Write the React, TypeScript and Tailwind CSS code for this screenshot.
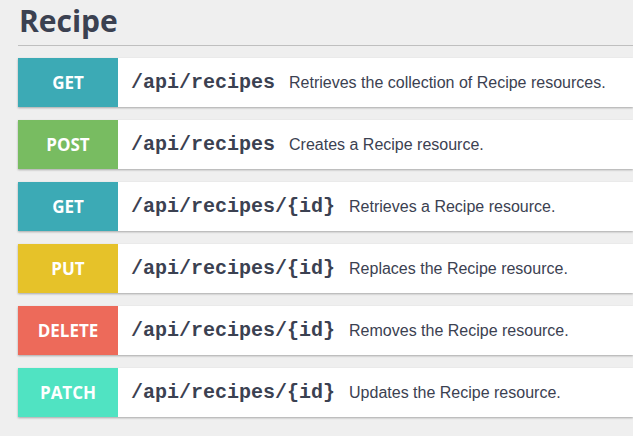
import React from "react";

const ops = [
  { method: "GET", color: "bg-[#3caab5]", path: "/api/recipes", desc: "Retrieves the collection of Recipe resources." },
  { method: "POST", color: "bg-[#78bc61]", path: "/api/recipes", desc: "Creates a Recipe resource." },
  { method: "GET", color: "bg-[#3caab5]", path: "/api/recipes/{id}", desc: "Retrieves a Recipe resource." },
  { method: "PUT", color: "bg-[#e6c229]", path: "/api/recipes/{id}", desc: "Replaces the Recipe resource." },
  { method: "DELETE", color: "bg-[#ed6a5a]", path: "/api/recipes/{id}", desc: "Removes the Recipe resource." },
  { method: "PATCH", color: "bg-[#50e3c2]", path: "/api/recipes/{id}", desc: "Updates the Recipe resource." },
];

export default function App() {
  return (
    <div className="min-h-screen bg-[#efefef] pl-[18px] pt-[1px] overflow-hidden">
      <h2 className="font-['Open_Sans',sans-serif] font-bold text-[30px] leading-[40px] text-[#3b4151] pl-[1px] pb-[4px] border-b border-[#bfbfbf]">
        Recipe
      </h2>
      <div className="flex flex-col gap-[13px] mt-[12px]">
        {ops.map((op, i) => (
          <div key={i} className="flex items-center h-[49px] bg-white shadow-[0_1px_2px_rgba(0,0,0,0.3)]">
            <div className={`${op.color} w-[100px] h-full flex items-center justify-center text-white font-['Open_Sans',sans-serif] font-bold text-[17px]`}>
              {op.method}
            </div>
            <span className="ml-[13px] font-['Liberation_Mono',monospace] font-bold text-[20px] text-[#3b4151]">
              {op.path}
            </span>
            <span className="ml-[14px] font-['Liberation_Sans',sans-serif] text-[16px] text-[#3b4151]">
              {op.desc}
            </span>
          </div>
        ))}
      </div>
    </div>
  );
}
